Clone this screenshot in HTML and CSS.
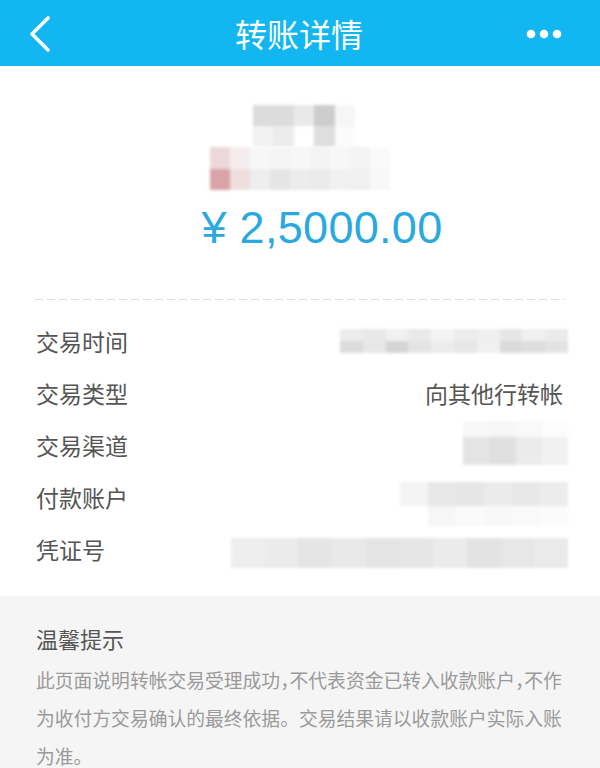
FILE: index.html
```html
<!DOCTYPE html>
<html lang="zh-CN">
<head>
<meta charset="utf-8">
<title>转账详情</title>
<link rel="stylesheet" href="styles.css">
</head>
<body>
<header class="topbar">
  <svg class="back" width="24" height="36" viewBox="0 0 24 36"><path d="M20 2 L4 18 L20 34" fill="none" stroke="#fff" stroke-width="3.6" stroke-linecap="round" stroke-linejoin="round"/></svg>
  <h1 class="title">转账详情</h1>
  <svg class="more" width="36" height="10" viewBox="0 0 36 10"><circle cx="5" cy="5" r="4.3" fill="#fff"/><circle cx="18" cy="5" r="4.3" fill="#fff"/><circle cx="31" cy="5" r="4.3" fill="#fff"/></svg>
</header>

<section class="summary">
  <div class="mosaic m-name">
    <i style="background:#dcdcdc"></i><i style="background:#dcdcdc"></i><i style="background:#e9e9e9"></i><i style="background:#cdcdcd"></i><i style="background:#f6f6f6"></i>
    <i style="background:#f2f2f2"></i><i style="background:#ececec"></i><i style="background:#ffffff"></i><i style="background:#dedede"></i><i style="background:#fbfbfb"></i>
  </div>
  <div class="mosaic m-sub">
    <i style="background:#ecd8da"></i><i style="background:#f5eded"></i><i style="background:#f7f7f7"></i><i style="background:#f5f5f5"></i><i style="background:#f7f7f7"></i><i style="background:#f4f4f4"></i><i style="background:#f7f7f7"></i><i style="background:#f3f3f3"></i><i style="background:#fafafa"></i>
    <i style="background:#d9a3a8"></i><i style="background:#efdede"></i><i style="background:#eeeeee"></i><i style="background:#e5e5e5"></i><i style="background:#ececec"></i><i style="background:#eaeaea"></i><i style="background:#f1f1f1"></i><i style="background:#f0f0f0"></i><i style="background:#f8f8f8"></i>
  </div>
  <div class="amount">¥ 2,5000.00</div>
</section>

<div class="divider"></div>

<ul class="rows">
  <li class="row">
    <span class="label">交易时间</span>
    <div class="mosaic v-time">
      <i style="background:#ececec"></i><i style="background:#e8e8e8"></i><i style="background:#f1f1f1"></i><i style="background:#e9e9e9"></i><i style="background:#f3f3f3"></i><i style="background:#ececec"></i><i style="background:#efefef"></i><i style="background:#e6e6e6"></i><i style="background:#f0f0f0"></i><i style="background:#ebebeb"></i>
      <i style="background:#dcdcdc"></i><i style="background:#e7e7e7"></i><i style="background:#d5d5d5"></i><i style="background:#e4e4e4"></i><i style="background:#ececec"></i><i style="background:#e7e7e7"></i><i style="background:#f0f0f0"></i><i style="background:#dadada"></i><i style="background:#dedede"></i><i style="background:#e3e3e3"></i>
    </div>
  </li>
  <li class="row">
    <span class="label">交易类型</span>
    <span class="value">向其他行转帐</span>
  </li>
  <li class="row">
    <span class="label">交易渠道</span>
    <div class="mosaic v-channel">
      <i style="background:#f8f8f8"></i><i style="background:#f6f6f6"></i><i style="background:#f9f9f9"></i><i style="background:#fcfcfc"></i>
      <i style="background:#e4e4e4"></i><i style="background:#e0e0e0"></i><i style="background:#ebebeb"></i><i style="background:#f1f1f1"></i>
    </div>
  </li>
  <li class="row">
    <span class="label">付款账户</span>
    <div class="mosaic v-account">
      <i style="background:#f4f4f4"></i><i style="background:#e7e7e7"></i><i style="background:#e6e6e6"></i><i style="background:#ebebeb"></i><i style="background:#e8e8e8"></i><i style="background:#ececec"></i>
      <i style="background:#ffffff"></i><i style="background:#f6f6f6"></i><i style="background:#fafafa"></i><i style="background:#f8f8f8"></i><i style="background:#f9f9f9"></i><i style="background:#fbfbfb"></i>
    </div>
  </li>
  <li class="row">
    <span class="label">凭证号</span>
    <div class="mosaic v-voucher">
      <i style="background:#eeeeee"></i><i style="background:#ebebeb"></i><i style="background:#e5e5e5"></i><i style="background:#e9e9e9"></i><i style="background:#e4e4e4"></i><i style="background:#e6e6e6"></i><i style="background:#ebebeb"></i><i style="background:#e3e3e3"></i><i style="background:#e7e7e7"></i><i style="background:#eaeaea"></i>
    </div>
  </li>
</ul>

<section class="tips">
  <h2 class="tips-title">温馨提示</h2>
  <p class="tips-text">
    <span class="line">此页面说明转帐交易受理成功<span class="half">，</span>不代表资金已转入收款账户<span class="half">，</span>不作</span>
    <span class="line">为收付方交易确认的最终依据。交易结果请以收款账户实际入账</span>
    <span class="line">为准。</span>
  </p>
</section>
</body>
</html>
```

FILE: styles.css
```css
* { box-sizing: border-box; }
html, body { margin: 0; padding: 0; }
body {
  width: 600px;
  height: 768px;
  overflow: hidden;
  background: #ffffff;
  font-family: "Noto Sans CJK SC", "Noto Sans", sans-serif;
}

.topbar {
  height: 66px;
  background: #12b6f0;
  display: flex;
  align-items: center;
  justify-content: space-between;
  padding: 0 38px 0 28px;
}
.back { display: block; margin-top: 1px; }
.more { display: block; margin-top: 2px; }
.title {
  margin: 0;
  color: #ffffff;
  font-size: 32px;
  font-weight: 400;
  line-height: 40px;
  margin-left: 20px;
}

.summary {
  display: flex;
  flex-direction: column;
  align-items: center;
  padding-top: 39px;
}
.mosaic {
  display: grid;
  filter: blur(1.6px);
}
.mosaic i { display: block; }
.m-name {
  width: 102px;
  height: 42px;
  grid-template-columns: repeat(5, 1fr);
  grid-template-rows: repeat(2, 1fr);
  margin-left: 8px;
}
.m-sub {
  width: 180px;
  height: 43px;
  grid-template-columns: repeat(9, 1fr);
  grid-template-rows: repeat(2, 1fr);
}
.amount {
  margin-top: 12px;
  margin-left: 44px;
  font-family: "Liberation Sans", Arial, sans-serif;
  font-size: 45px;
  line-height: 52px;
  color: #2aa9df;
  letter-spacing: 0.3px;
}

.divider {
  margin: 45px 35px 0;
  height: 1px;
  background: repeating-linear-gradient(to right, #dedede 0 8px, transparent 8px 12px);
}

.rows {
  list-style: none;
  margin: 15px 0 0;
  padding: 0 36px 21px;
}
.row {
  height: 52px;
  display: flex;
  align-items: center;
  justify-content: space-between;
}
.label, .value {
  font-size: 23px;
  color: #555555;
  line-height: 30px;
}
.value { margin-right: 1px; }

.v-time {
  width: 228px;
  height: 24px;
  grid-template-columns: repeat(10, 1fr);
  grid-template-rows: repeat(2, 1fr);
  margin-right: -4px;
}
.v-channel {
  width: 105px;
  height: 44px;
  grid-template-columns: repeat(4, 1fr);
  grid-template-rows: 16px 1fr;
  margin-right: -4px;
  margin-top: -4px;
}
.v-account {
  width: 168px;
  height: 44px;
  grid-template-columns: repeat(6, 1fr);
  grid-template-rows: 24px 1fr;
  margin-right: -4px;
  margin-top: 14px;
}
.v-voucher {
  width: 337px;
  height: 30px;
  grid-template-columns: repeat(10, 1fr);
  margin-right: -4px;
  margin-top: 8px;
}

.tips {
  background: #f5f5f5;
  padding: 27px 20px 0 36px;
  height: 172px;
}
.tips-title {
  margin: 0;
  font-size: 22px;
  font-weight: 400;
  color: #555555;
  line-height: 30px;
}
.tips-text {
  margin: 15px 0 0;
  display: flex;
  flex-direction: column;
  gap: 14px;
  font-size: 18.8px;
  line-height: 24px;
  color: #9a9a9a;
  white-space: nowrap;
}
.line { display: block; }
.half { font-feature-settings: "halt"; }
```
